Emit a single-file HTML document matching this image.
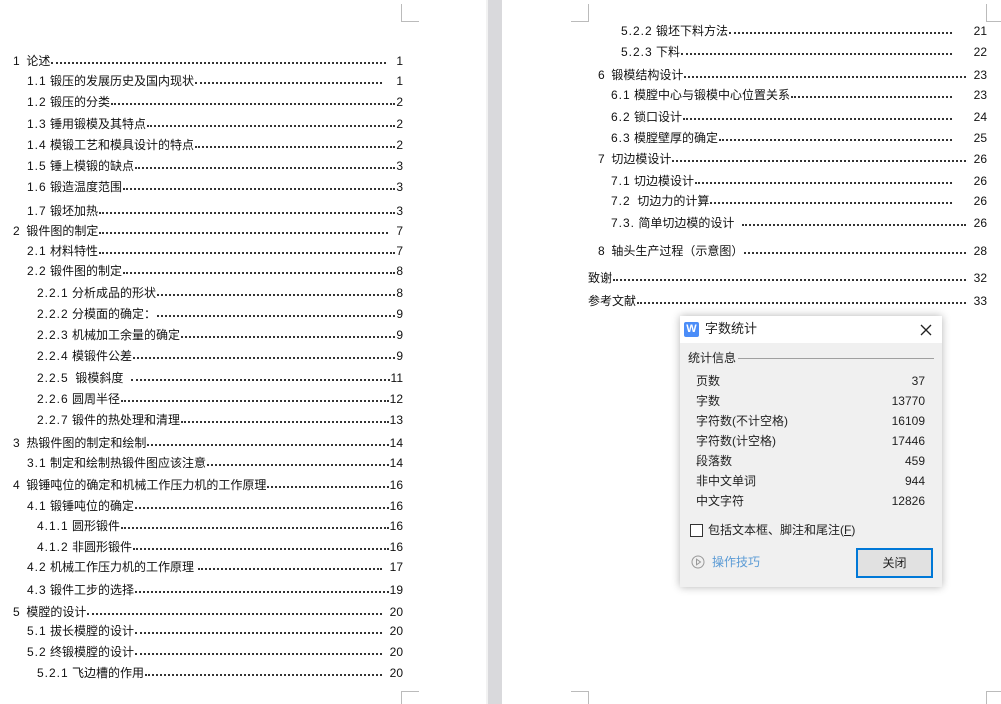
<!DOCTYPE html>
<html><head><meta charset="utf-8"><style>
*{margin:0;padding:0;box-sizing:border-box}
body{width:1001px;height:704px;background:#fff;position:relative;overflow:hidden;font-family:"Liberation Sans","Noto Sans CJK SC",sans-serif;color:#111}
.gap{position:absolute;left:488px;top:0;width:14px;height:704px;background:#d9d9dc}
.gap2{position:absolute;left:486px;top:0;width:2px;height:704px;background:#f2f2f2}
.m{position:absolute;border-color:#bbb;border-style:solid;border-width:0}
.r{position:absolute;display:flex;align-items:flex-end;font-size:12px;line-height:14px;height:14px;white-space:pre;font-family:"Liberation Sans","WenQuanYi Zen Hei",sans-serif}
.r b{font-weight:normal;letter-spacing:1px}
.r .l{flex:1;border-bottom:2px dotted #333;margin:0 1px 4px 1px;height:1px}
.r .n{text-align:right}
.dlg{position:absolute;left:680px;top:316px;width:262px;height:271px;background:#f0f0f0;box-shadow:0 0 8px rgba(0,0,0,.3);font-family:"Liberation Sans","Noto Sans CJK SC",sans-serif;font-size:12px;color:#222}
.dlg .t{position:absolute;left:0;top:0;width:262px;height:27px;background:#fff}
.dlg .a{position:absolute;white-space:nowrap;line-height:16px}
</style></head><body>
<div class="gap2"></div><div class="gap"></div>
<div class="m" style="left:401px;top:4px;width:18px;height:18px;border-left-width:1px;border-bottom-width:1px"></div>
<div class="m" style="left:401px;top:691px;width:18px;height:13px;border-left-width:1px;border-top-width:1px"></div>
<div class="m" style="left:571px;top:4px;width:18px;height:18px;border-right-width:1px;border-bottom-width:1px"></div>
<div class="m" style="left:571px;top:691px;width:18px;height:13px;border-right-width:1px;border-top-width:1px"></div>
<div class="m" style="left:986px;top:4px;width:15px;height:18px;border-left-width:1px;border-bottom-width:1px"></div>
<div class="m" style="left:986px;top:691px;width:15px;height:13px;border-left-width:1px;border-top-width:1px"></div>

<div class="r" style="left:13px;top:54px;width:390px">1  论述<span class="l" style="margin-right:10px"></span><span class="n">1</span></div>
<div class="r" style="left:27px;top:74px;width:376px"><b>1.1</b> 锻压的发展历史及国内现状<span class="l" style="margin-right:14px"></span><span class="n">1</span></div>
<div class="r" style="left:27px;top:95px;width:376px"><b>1.2</b> 锻压的分类<span class="l"></span><span class="n">2</span></div>
<div class="r" style="left:27px;top:117px;width:376px"><b>1.3</b> 锤用锻模及其特点<span class="l"></span><span class="n">2</span></div>
<div class="r" style="left:27px;top:138px;width:376px"><b>1.4</b> 模锻工艺和模具设计的特点<span class="l"></span><span class="n">2</span></div>
<div class="r" style="left:27px;top:159px;width:376px"><b>1.5</b> 锤上模锻的缺点<span class="l"></span><span class="n">3</span></div>
<div class="r" style="left:27px;top:180px;width:376px"><b>1.6</b> 锻造温度范围<span class="l"></span><span class="n">3</span></div>
<div class="r" style="left:27px;top:204px;width:376px"><b>1.7</b> 锻坯加热<span class="l"></span><span class="n">3</span></div>
<div class="r" style="left:13px;top:224px;width:390px">2  锻件图的制定<span class="l" style="margin-right:8px"></span><span class="n">7</span></div>
<div class="r" style="left:27px;top:244px;width:376px"><b>2.1</b> 材料特性<span class="l"></span><span class="n">7</span></div>
<div class="r" style="left:27px;top:264px;width:376px"><b>2.2</b> 锻件图的制定<span class="l"></span><span class="n">8</span></div>
<div class="r" style="left:37px;top:286px;width:366px"><b>2.2.1</b> 分析成品的形状<span class="l"></span><span class="n">8</span></div>
<div class="r" style="left:37px;top:307px;width:366px"><b>2.2.2</b> 分模面的确定：<span class="l"></span><span class="n">9</span></div>
<div class="r" style="left:37px;top:328px;width:366px"><b>2.2.3</b> 机械加工余量的确定<span class="l"></span><span class="n">9</span></div>
<div class="r" style="left:37px;top:349px;width:366px"><b>2.2.4</b> 模锻件公差<span class="l"></span><span class="n">9</span></div>
<div class="r" style="left:37px;top:371px;width:366px"><b>2.2.5</b>  锻模斜度  <span class="l"></span><span class="n">11</span></div>
<div class="r" style="left:37px;top:392px;width:366px"><b>2.2.6</b> 圆周半径<span class="l"></span><span class="n">12</span></div>
<div class="r" style="left:37px;top:413px;width:366px"><b>2.2.7</b> 锻件的热处理和清理<span class="l"></span><span class="n">13</span></div>
<div class="r" style="left:13px;top:436px;width:390px">3  热锻件图的制定和绘制<span class="l"></span><span class="n">14</span></div>
<div class="r" style="left:27px;top:456px;width:376px"><b>3.1</b> 制定和绘制热锻件图应该注意<span class="l"></span><span class="n">14</span></div>
<div class="r" style="left:13px;top:478px;width:390px">4  锻锤吨位的确定和机械工作压力机的工作原理<span class="l"></span><span class="n">16</span></div>
<div class="r" style="left:27px;top:499px;width:376px"><b>4.1</b> 锻锤吨位的确定<span class="l"></span><span class="n">16</span></div>
<div class="r" style="left:37px;top:519px;width:366px"><b>4.1.1</b> 圆形锻件<span class="l"></span><span class="n">16</span></div>
<div class="r" style="left:37px;top:540px;width:366px"><b>4.1.2</b> 非圆形锻件<span class="l"></span><span class="n">16</span></div>
<div class="r" style="left:27px;top:560px;width:376px"><b>4.2</b> 机械工作压力机的工作原理 <span class="l" style="margin-right:8px"></span><span class="n">17</span></div>
<div class="r" style="left:27px;top:583px;width:376px"><b>4.3</b> 锻件工步的选择<span class="l"></span><span class="n">19</span></div>
<div class="r" style="left:13px;top:605px;width:390px">5  模膛的设计<span class="l" style="margin-right:8px"></span><span class="n">20</span></div>
<div class="r" style="left:27px;top:624px;width:376px"><b>5.1</b> 拔长模膛的设计<span class="l" style="margin-right:8px"></span><span class="n">20</span></div>
<div class="r" style="left:27px;top:645px;width:376px"><b>5.2</b> 终锻模膛的设计<span class="l" style="margin-right:8px"></span><span class="n">20</span></div>
<div class="r" style="left:37px;top:666px;width:366px"><b>5.2.1</b> 飞边槽的作用<span class="l" style="margin-right:8px"></span><span class="n">20</span></div>

<div class="r" style="left:621px;top:24px;width:366px"><b>5.2.2</b> 锻坯下料方法<span class="l" style="margin-right:22px"></span><span class="n">21</span></div>
<div class="r" style="left:621px;top:45px;width:366px"><b>5.2.3</b> 下料<span class="l" style="margin-right:22px"></span><span class="n">22</span></div>
<div class="r" style="left:598px;top:68px;width:389px">6  锻模结构设计<span class="l" style="margin-right:8px"></span><span class="n">23</span></div>
<div class="r" style="left:611px;top:88px;width:376px"><b>6.1</b> 模膛中心与锻模中心位置关系<span class="l" style="margin-right:22px"></span><span class="n">23</span></div>
<div class="r" style="left:611px;top:110px;width:376px"><b>6.2</b> 锁口设计<span class="l" style="margin-right:22px"></span><span class="n">24</span></div>
<div class="r" style="left:611px;top:131px;width:376px"><b>6.3</b> 模膛壁厚的确定<span class="l" style="margin-right:22px"></span><span class="n">25</span></div>
<div class="r" style="left:598px;top:152px;width:389px">7  切边模设计<span class="l" style="margin-right:8px"></span><span class="n">26</span></div>
<div class="r" style="left:611px;top:174px;width:376px"><b>7.1</b> 切边模设计<span class="l" style="margin-right:22px"></span><span class="n">26</span></div>
<div class="r" style="left:611px;top:194px;width:376px"><b>7.2</b>  切边力的计算<span class="l" style="margin-right:22px"></span><span class="n">26</span></div>
<div class="r" style="left:611px;top:216px;width:376px"><b>7.3.</b> 简单切边模的设计  <span class="l" style="margin-right:8px"></span><span class="n">26</span></div>
<div class="r" style="left:598px;top:244px;width:389px">8  轴头生产过程（示意图）<span class="l" style="margin-right:8px"></span><span class="n">28</span></div>
<div class="r" style="left:588px;top:271px;width:399px">致谢<span class="l" style="margin-right:8px"></span><span class="n">32</span></div>
<div class="r" style="left:588px;top:294px;width:399px">参考文献<span class="l" style="margin-right:8px"></span><span class="n">33</span></div>

<div class="dlg">
 <div class="t"></div>
 <div style="position:absolute;left:4px;top:6px;width:15px;height:15px;background:#4b8df8;border-radius:2px;color:#fff;font-size:11px;line-height:15px;text-align:center;font-weight:bold">W</div>
 <div class="a" style="left:25px;top:5px;font-size:13px">字数统计</div>
 <svg style="position:absolute;left:240px;top:8px" width="12" height="12"><path d="M1 1L11 11M11 1L1 11" stroke="#222" stroke-width="1.3"/></svg>
 <div class="a" style="left:8px;top:34px">统计信息</div>
 <div style="position:absolute;left:58px;top:42px;width:196px;height:1px;background:#a0a0a0"></div>
 <div class="a" style="left:16px;top:57px">页数</div><div class="a" style="right:17px;top:57px">37</div>
 <div class="a" style="left:16px;top:77px">字数</div><div class="a" style="right:17px;top:77px">13770</div>
 <div class="a" style="left:16px;top:97px">字符数(不计空格)</div><div class="a" style="right:17px;top:97px">16109</div>
 <div class="a" style="left:16px;top:117px">字符数(计空格)</div><div class="a" style="right:17px;top:117px">17446</div>
 <div class="a" style="left:16px;top:137px">段落数</div><div class="a" style="right:17px;top:137px">459</div>
 <div class="a" style="left:16px;top:157px">非中文单词</div><div class="a" style="right:17px;top:157px">944</div>
 <div class="a" style="left:16px;top:177px">中文字符</div><div class="a" style="right:17px;top:177px">12826</div>
 <div style="position:absolute;left:10px;top:208px;width:13px;height:13px;border:1px solid #333;background:#fff"></div>
 <div class="a" style="left:28px;top:206px">包括文本框、脚注和尾注(<u>F</u>)</div>
 <svg style="position:absolute;left:11px;top:239px" width="14" height="14"><circle cx="7" cy="7" r="6" fill="none" stroke="#999" stroke-width="1"/><path d="M5.5 4.2L9.5 7L5.5 9.8Z" fill="none" stroke="#999"/></svg>
 <div class="a" style="left:32px;top:238px;color:#5b9bd5">操作技巧</div>
 <div style="position:absolute;left:176px;top:232px;width:77px;height:30px;background:#e1e1e1;border:2px solid #0078d7;text-align:center;line-height:26px">关闭</div>
</div>
</body></html>
